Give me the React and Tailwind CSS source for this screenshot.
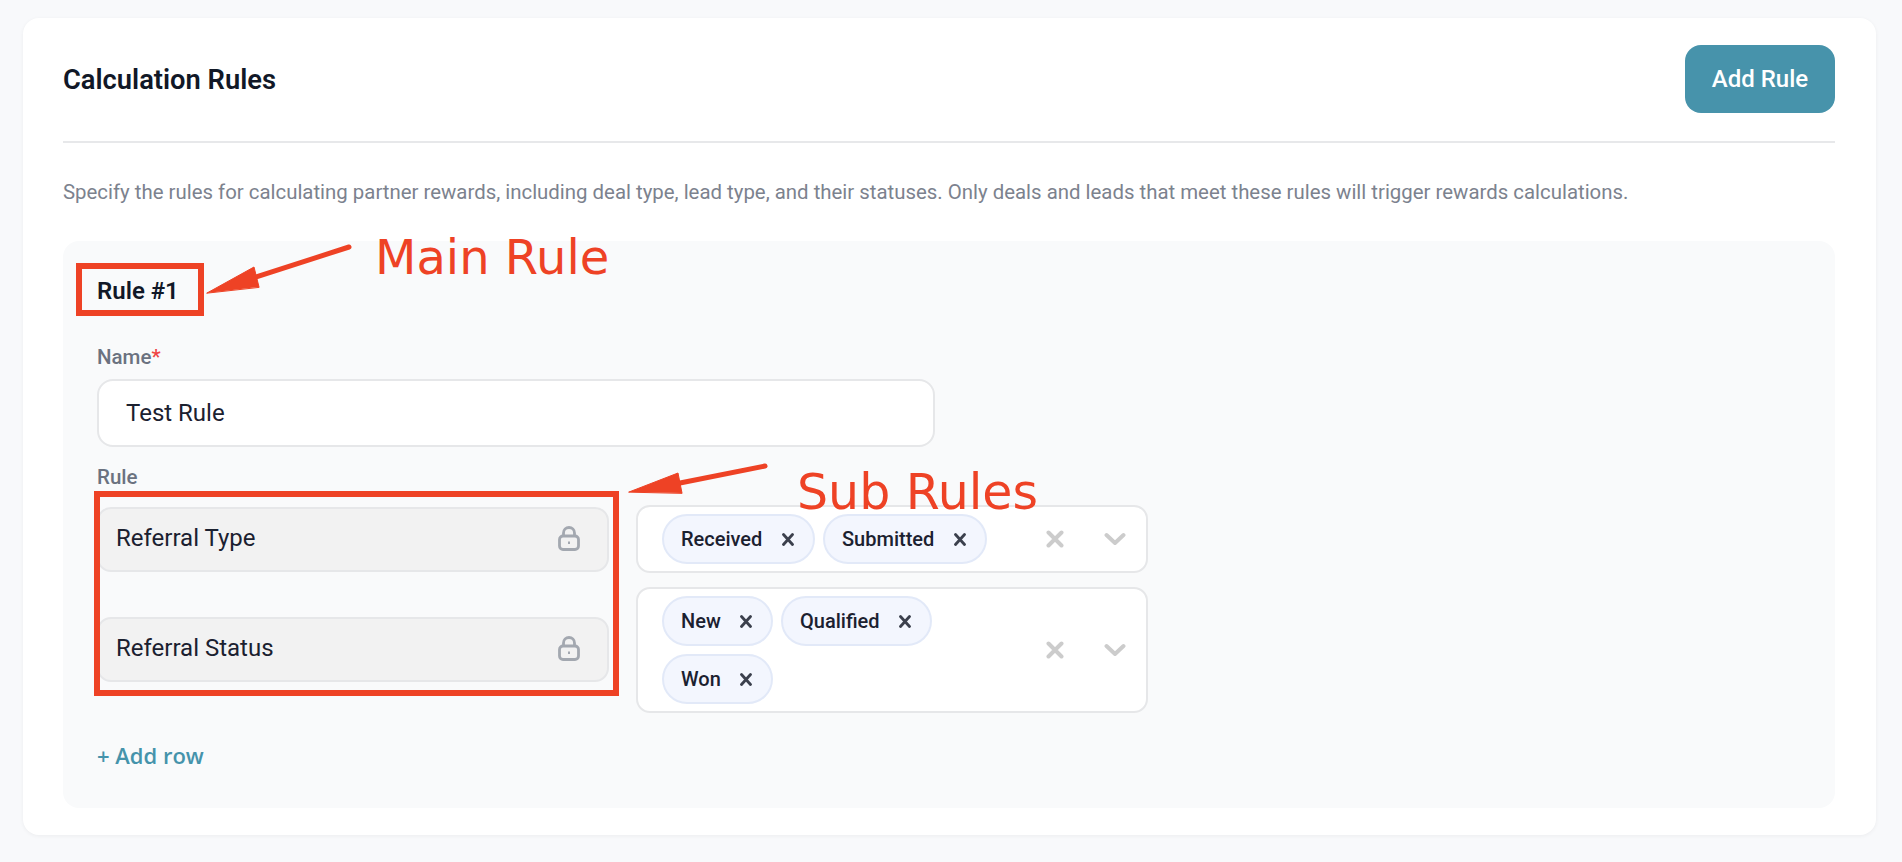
import React from 'react';

const roboto = { fontFamily: 'Roboto, sans-serif' };

function LockIcon() {
    return (
        <svg width="22" height="25" viewBox="0 0 22 25" fill="none" stroke="#a3a8b0" strokeWidth="2.8">
            <rect x="1.5" y="10" width="19" height="13.5" rx="3.5" />
            <path d="M5.5 10V7a5.5 5.5 0 0 1 11 0v3" />
            <path d="M11 15.5v2.5" strokeWidth="2" />
        </svg>
    );
}

function SmallX() {
    return (
        <svg width="12" height="13" viewBox="0 0 12 13" stroke="#3b404d" strokeWidth="2.8" strokeLinecap="round">
            <path d="M1.5 1.5l9 10M10.5 1.5l-9 10" />
        </svg>
    );
}

function Chip({ label, width }) {
    return (
        <div className={`${width} h-[50px] flex items-center justify-between pl-[17px] pr-[19px] bg-[#f3f6fe] border-2 border-[#e2e9f8] rounded-[25px]`}>
            <span className="text-[20px] font-medium text-[#1b2130] whitespace-nowrap">{label}</span>
            <SmallX />
        </div>
    );
}

function LockedSelect({ label, className }) {
    return (
        <div className={`w-[512px] h-[65px] flex items-center justify-between pl-[17px] pr-[27px] pb-[3px] bg-[#f2f2f2] border-2 border-[#e6e7e9] rounded-[14px] ${className}`}>
            <span className="text-[24px] text-[#1b2130]">{label}</span>
            <LockIcon />
        </div>
    );
}

function MultiSelect({ className, children }) {
    return (
        <div className={`w-[512px] flex items-center bg-white border-2 border-[#e6e7e9] rounded-[14px] pl-[24px] pr-[20px] ${className}`}>
            <div className="w-[352px] flex flex-wrap gap-2">{children}</div>
            <div className="flex-1 flex items-center justify-between pl-[32px]">
                <svg width="18" height="18" viewBox="0 0 18 18" stroke="#cccccc" strokeWidth="4" strokeLinecap="round">
                    <path d="M2.5 2.5l13 13M15.5 2.5l-13 13" />
                </svg>
                <svg width="22" height="14" viewBox="0 0 22 14" fill="none" stroke="#cccccc" strokeWidth="4" strokeLinecap="round" strokeLinejoin="round">
                    <path d="M2.5 3l8.5 8 8.5-8" />
                </svg>
            </div>
        </div>
    );
}

export default function App() {
    return (
        <div className="relative w-[1902px] h-[862px] overflow-hidden bg-[#f8f9fb] pt-[18px] pl-[23px]" style={roboto}>
            <div className="w-[1853px] h-[817px] bg-white rounded-[16px] shadow-[0_1px_4px_rgba(0,0,0,0.05)] pl-[40px] pr-[41px]">
                {/* Header */}
                <div className="flex items-center justify-between pt-[27px] pb-[28px] border-b-2 border-[#e7e8ea]">
                    <h2 className="text-[27.3px] pt-[2px] font-semibold text-[#111827]">Calculation Rules</h2>
                    <button className="w-[150px] h-[68px] bg-[#4793ab] text-white text-[24px] font-medium rounded-[16px]">Add Rule</button>
                </div>
                <p className="mt-[36px] text-[20.4px] leading-[26px] text-[#7c828e] whitespace-nowrap">
                    Specify the rules for calculating partner rewards, including deal type, lead type, and their statuses. Only deals and leads that meet these rules will trigger rewards calculations.
                </p>

                {/* Rule panel */}
                <div className="mt-[36px] h-[567px] bg-[#f9fafb] rounded-[16px] pl-[34px] pt-[36px]">
                    <div className="text-[24px] leading-[28px] font-semibold text-[#111827]">Rule #1</div>
                    <div className="mt-[40px] text-[20.5px] leading-[24px] font-medium text-[#6b7280]">
                        Name<span className="text-[#ef4444]">*</span>
                    </div>
                    <div className="mt-[10px] w-[838px] h-[68px] flex items-center pl-[27px] bg-white border-2 border-[#e6e7e9] rounded-[16px] text-[24px] text-[#1b2130]">
                        Test Rule
                    </div>
                    <div className="mt-[18px] text-[20.5px] leading-[24px] font-medium text-[#6b7280]">Rule</div>
                    <div className="mt-[20px] flex gap-[27px]">
                        <div>
                            <LockedSelect label="Referral Type" className="mt-[-2px]" />
                            <LockedSelect label="Referral Status" className="mt-[45px]" />
                        </div>
                        <div className="mt-[-4px] flex flex-col gap-[14px]">
                            <MultiSelect className="h-[68px]">
                                <Chip label="Received" width="w-[153px]" />
                                <Chip label="Submitted" width="w-[164px]" />
                            </MultiSelect>
                            <MultiSelect className="h-[126px]">
                                <Chip label="New" width="w-[111px]" />
                                <Chip label="Qualified" width="w-[151px]" />
                                <Chip label="Won" width="w-[111px]" />
                            </MultiSelect>
                        </div>
                    </div>
                    <div className="mt-[28px] text-[22px] leading-[28px] font-semibold text-[#4593ab]" style={{ fontFamily: '"Open Sans", sans-serif' }}>
                        + Add row
                    </div>
                </div>
            </div>

            {/* Annotations drawn over the screenshot */}
            <div className="absolute left-[76px] top-[263px] w-[128px] h-[53px] border-[6px] border-[#ee4225]" />
            <div className="absolute left-[94px] top-[491px] w-[525px] h-[205px] border-[6px] border-[#ee4225]" />
            <svg className="absolute left-0 top-0 pointer-events-none" width="1902" height="862" fill="#ee4225" stroke="#ee4225" strokeLinecap="round">
                <path d="M349 247L250 279" strokeWidth="5" />
                <polygon points="207,293 254,267 259,287" strokeWidth="1" />
                <path d="M765 466L675 484" strokeWidth="5" />
                <polygon points="629,492 678,473 682,493" strokeWidth="1" />
            </svg>
            <span className="absolute left-[375px] top-[228px] text-[48px] leading-[58px] text-[#ee4225] whitespace-nowrap" style={{ fontFamily: '"DejaVu Sans", sans-serif' }}>Main Rule</span>
            <span className="absolute left-[797px] top-[464px] text-[49px] leading-[58px] text-[#ee4225] whitespace-nowrap" style={{ fontFamily: '"DejaVu Sans", sans-serif' }}>Sub Rules</span>
        </div>
    );
}
